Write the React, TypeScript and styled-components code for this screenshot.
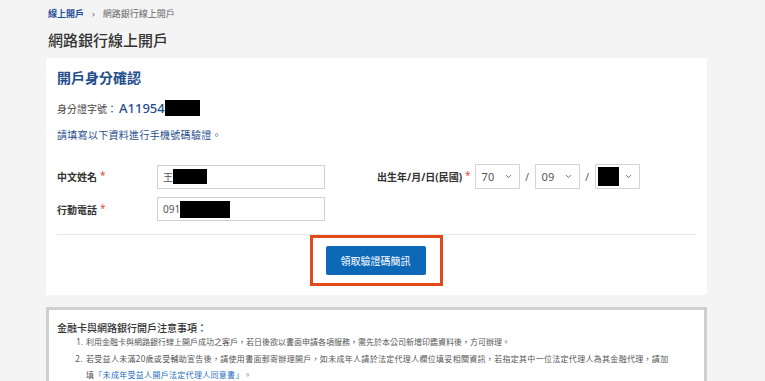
import React from "react";
import styled, { createGlobalStyle } from "styled-components";
import { ChevronDown } from "lucide-react";

const GlobalStyle = createGlobalStyle`
  html, body {
    margin: 0;
    padding: 0;
    background: #f4f4f4;
    font-family: "Noto Sans", "Noto Sans CJK TC", sans-serif;
    color: #333;
  }
`;

const Page = styled.div`
  width: 765px;
  height: 381px;
  overflow: hidden;
  padding: 5px 0 0 46px;
  box-sizing: border-box;
`;

const Breadcrumb = styled.div`
  display: flex;
  align-items: center;
  gap: 8px;
  height: 16px;
  padding-left: 2px;
  font-size: 9px;
  color: #666;
`;

const CrumbLink = styled.span`
  color: #1f4e9a;
  font-weight: 700;
`;

const PageTitle = styled.h1`
  margin: 8px 0 0 2px;
  font-size: 15px;
  line-height: 22px;
  font-weight: 500;
  color: #333;
`;

const Card = styled.section`
  width: 661px;
  margin-top: 7px;
  background: #fff;
  padding: 10px 11px 9px 11px;
  box-sizing: border-box;
`;

const CardTitle = styled.h2`
  margin: 0;
  font-size: 14px;
  line-height: 20px;
  font-weight: 700;
  color: #1f4e8c;
`;

const IdRow = styled.div`
  display: flex;
  align-items: center;
  margin-top: 10px;
  height: 20px;
  font-size: 10px;
  color: #444;
`;

const IdValue = styled.span`
  font-size: 13px;
  font-weight: 500;
  color: #1f4e8c;
  margin-left: 2px;
`;

const Mask = styled.span<{ w: number; h: number }>`
  display: inline-block;
  width: ${(p) => p.w}px;
  height: ${(p) => p.h}px;
  background: #000;
`;

const Hint = styled.p`
  margin: 9px 0 0;
  font-size: 10px;
  line-height: 16px;
  color: #1f4e8c;
  letter-spacing: 0.3px;
`;

const Form = styled.div`
  margin-top: 21px;
  display: flex;
  flex-direction: column;
  gap: 8px;
`;

const FormRow = styled.div`
  display: flex;
  align-items: center;
  gap: 52px;
`;

const Field = styled.div`
  display: flex;
  align-items: center;
`;

const Label = styled.label<{ width?: number }>`
  width: ${(p) => (p.width ? p.width + "px" : "auto")};
  font-size: 10px;
  font-weight: 700;
  color: #333;
  white-space: nowrap;
  flex-shrink: 0;
`;

const Required = styled.span`
  color: #e05050;
  margin-left: 3px;
  font-weight: 400;
  position: relative;
  top: -2px;
`;

const TextBox = styled.div`
  width: 168px;
  height: 24px;
  box-sizing: border-box;
  border: 1px solid #d0d0d0;
  display: flex;
  align-items: center;
  padding-left: 5px;
  font-size: 10px;
  color: #555;
`;

const Select = styled.div<{ $mask?: boolean }>`
  width: 45px;
  height: 25px;
  box-sizing: border-box;
  border: 1px solid #d4d4d4;
  display: flex;
  align-items: center;
  justify-content: space-between;
  padding: 0 6px 0 ${(p) => (p.$mask ? 2 : 6)}px;
  font-size: 11px;
  color: #555;
  background: #fff;
`;

const Slash = styled.span`
  width: 15px;
  text-align: center;
  font-size: 10px;
  color: #555;
`;

const Divider = styled.hr`
  border: none;
  border-top: 1px solid #e8e8e8;
  margin: 13px 0 0;
`;

const ButtonArea = styled.div`
  display: flex;
  justify-content: center;
  padding-right: 1px;
`;

const HighlightFrame = styled.div`
  border: 3px solid #e2491b;
  padding: 8px 14px 8px 13px;
`;

const PrimaryButton = styled.button`
  width: 100px;
  height: 29px;
  border: none;
  border-radius: 2px;
  background: #0d68b8;
  color: #fff;
  font-family: inherit;
  font-size: 10px;
  cursor: pointer;
`;

const Notice = styled.section`
  width: 661px;
  margin-top: 12px;
  background: #fff;
  border: 3px solid #cfcfcf;
  box-sizing: border-box;
  padding: 12px 30px 0 8px;
  height: 90px;
`;

const NoticeTitle = styled.h3`
  margin: 0;
  font-size: 10px;
  line-height: 12px;
  font-weight: 500;
  color: #333;
`;

const NoticeList = styled.ol`
  margin: 0;
  padding-left: 28px;
  font-size: 8px;
  line-height: 16.5px;
  color: #555;
  li {
    padding-left: 1px;
  }
  li + li {
    letter-spacing: 0.3px;
  }
`;

const NoticeLink = styled.a`
  color: #2a6fc0;
  text-decoration: none;
`;

export default function App() {
  return (
    <>
      <GlobalStyle />
      <Page>
        <Breadcrumb>
          <CrumbLink>線上開戶</CrumbLink>
          <span>›</span>
          <span>網路銀行線上開戶</span>
        </Breadcrumb>
        <PageTitle>網路銀行線上開戶</PageTitle>

        <Card>
          <CardTitle>開戶身分確認</CardTitle>
          <IdRow>
            身分證字號：<IdValue>A11954</IdValue>
            <Mask w={35} h={16} />
          </IdRow>
          <Hint>請填寫以下資料進行手機號碼驗證。</Hint>

          <Form>
            <FormRow>
              <Field>
                <Label width={100}>
                  中文姓名<Required>*</Required>
                </Label>
                <TextBox>
                  王<Mask w={34} h={15} />
                </TextBox>
              </Field>
              <Field>
                <Label>
                  出生年/月/日(民國)<Required>*</Required>
                </Label>
                <span style={{ width: 4 }} />
                <Select>
                  70 <ChevronDown size={9} strokeWidth={2.5} color="#666" />
                </Select>
                <Slash>/</Slash>
                <Select>
                  09 <ChevronDown size={9} strokeWidth={2.5} color="#666" />
                </Select>
                <Slash>/</Slash>
                <Select $mask>
                  <Mask w={21} h={19} />
                  <ChevronDown size={9} strokeWidth={2.5} color="#666" />
                </Select>
              </Field>
            </FormRow>
            <FormRow>
              <Field>
                <Label width={100}>
                  行動電話<Required>*</Required>
                </Label>
                <TextBox>
                  091<Mask w={50} h={17} />
                </TextBox>
              </Field>
            </FormRow>
          </Form>

          <Divider />
          <ButtonArea>
            <HighlightFrame>
              <PrimaryButton>領取驗證碼簡訊</PrimaryButton>
            </HighlightFrame>
          </ButtonArea>
        </Card>

        <Notice>
          <NoticeTitle>金融卡與網路銀行開戶注意事項：</NoticeTitle>
          <NoticeList>
            <li>
              利用金融卡與網路銀行線上開戶成功之客戶，若日後欲以書面申請各項服務，需先於本公司新增印鑑資料後，方可辦理。
            </li>
            <li>
              若受益人未滿20歲或受輔助宣告後，請使用書面郵寄辦理開戶，如未成年人請於法定代理人欄位填妥相關資訊，若指定其中一位法定代理人為其金融代理，請加填
              <NoticeLink>「未成年受益人開戶法定代理人同意書」</NoticeLink>。
            </li>
          </NoticeList>
        </Notice>
      </Page>
    </>
  );
}
